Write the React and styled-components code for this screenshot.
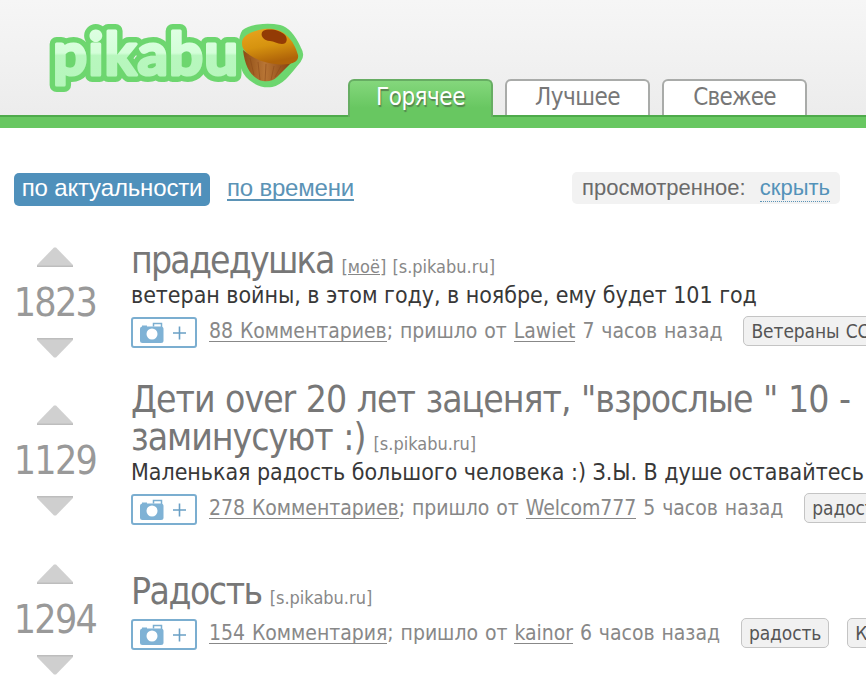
import React from 'react';
import styled, { createGlobalStyle } from 'styled-components';

const GlobalStyle = createGlobalStyle`
  body {
    margin: 0;
    background: #fff;
    font-family: "DejaVu Sans Condensed", "DejaVu Sans", Tahoma, sans-serif;
    font-stretch: condensed;
    overflow: hidden;
  }
  a { color: inherit; }
`;

const Page = styled.div`
  width: 866px;
  height: 684px;
  overflow: hidden;
`;

const Header = styled.header`
  display: flex;
  align-items: flex-end;
  box-sizing: border-box;
  height: 128px;
  border-bottom: 11px solid #68c761;
  background: linear-gradient(#f6f6f6, #ececec);
`;

const LogoLink = styled.a`
  align-self: flex-start;
  width: 348px;
  height: 108px;
`;

const TabBar = styled.nav`
  display: flex;
  flex: 1;
  gap: 12px;
  height: 38px;
  margin-left: -348px;
  padding-left: 348px;
  box-shadow: inset 0 -2px #4eaa4b;
`;

const Tab = styled.a`
  box-sizing: border-box;
  width: 145px;
  height: ${(p) => (p.$active ? 38 : 36)}px;
  border: 2px solid ${(p) => (p.$active ? '#67ad63' : '#a9aba9')};
  border-bottom: 0;
  border-radius: 6px 6px 0 0;
  background: ${(p) => (p.$active ? 'linear-gradient(#84d77c, #68c761 75%)' : '#fff')};
  color: ${(p) => (p.$active ? '#fff' : '#777')};
  text-shadow: ${(p) => (p.$active ? '1px 2px 1px #55834f' : 'none')};
  font-size: 24px;
  line-height: 32px;
  letter-spacing: ${(p) => p.$tracking || -0.5}px;
  text-align: center;
`;

const Toolbar = styled.div`
  display: flex;
  align-items: flex-start;
  height: 50px;
  padding: 45px 26px 0 14px;
  font-family: "Liberation Sans", Arial, sans-serif;
`;

const SortActive = styled.span`
  box-sizing: border-box;
  width: 196px;
  height: 33px;
  border-radius: 5px;
  background: #4f90bb;
  color: #fff;
  font-size: 24px;
  line-height: 30px;
  letter-spacing: -0.15px;
  text-align: center;
`;

const SortLink = styled.a`
  margin-left: 17px;
  border-bottom: 2px solid #5b93b6;
  color: #5b93b6;
  font-size: 24px;
  line-height: 26px;
  padding-top: 2px;
  height: 24px;
  letter-spacing: -0.2px;
`;

const SeenBox = styled.div`
  display: flex;
  box-sizing: border-box;
  width: 268px;
  height: 32px;
  margin: -1px 0 0 auto;
  padding: 0 10px;
  justify-content: space-between;
  border-radius: 5px;
  background: #f2f2f2;
  color: #6b6b6b;
  font-size: 22px;
  line-height: 32px;
`;

const HideLink = styled.a`
  height: 29px;
  border-bottom: 1px dotted #5b93b6;
  color: #5492b9;
`;

const Post = styled.article`
  display: grid;
  grid-template-columns: 131px 1fr;
  grid-template-rows: 158.5px;
  align-items: center;
  height: 158.5px;
`;

const Votes = styled.div`
  display: flex;
  flex-direction: column;
  align-items: center;
  width: 110px;
  height: 111px;
`;

const Score = styled.div`
  height: 71px;
  color: #999;
  font-size: 39px;
  line-height: 71px;
  letter-spacing: -1.7px;
`;

const Body = styled.div`
  padding-bottom: 15px;
  white-space: nowrap;
`;

const Title = styled.h2`
  margin: 0;
  color: #777;
  font-size: 37px;
  font-weight: 400;
  line-height: 38px;
  letter-spacing: ${(p) => p.$tracking}px;
  word-spacing: ${(p) => p.$wordGap || 0}px;
`;

const Source = styled.span`
  margin-left: 8px;
  color: #888;
  font-size: 18px;
  line-height: 1;
  letter-spacing: 0;
  word-spacing: 1px;
`;

const Text = styled.p`
  margin: 0 0 7px;
  color: #383838;
  font-size: 23px;
  line-height: 30px;
  letter-spacing: -0.04px;
`;

const Meta = styled.div`
  display: flex;
  height: 31px;
  margin-top: ${(p) => (p.$apart ? 8 : 0)}px;
  color: #888;
  font-size: 21px;
  line-height: 28px;
  letter-spacing: -0.03px;
  word-spacing: 1px;
  white-space: pre;
`;

const PhotoButton = styled.span`
  display: flex;
  box-sizing: border-box;
  width: 66px;
  height: 31px;
  margin-right: 12px;
  border: 2px solid #7baed0;
  border-radius: 3px;
`;

const Underlined = styled.a`
  height: 24px;
  border-bottom: 1px solid #888;
`;

const Tag = styled.span`
  box-sizing: border-box;
  flex: none;
  height: 30px;
  margin: -1px 0 0 ${(p) => (p.$next ? 18 : 21)}px;
  padding: 0 7px;
  border: 1px solid #c4c4c4;
  border-radius: 5px;
  background: #f1f1f1;
  color: #555;
  font-size: 19px;
  line-height: 28px;
  letter-spacing: -0.1px;
`;

const Logo = () => (
  <svg width="348" height="108" viewBox="0 0 348 108">
    <defs>
      <linearGradient id="letters" x1="0" y1="25" x2="0" y2="90" gradientUnits="userSpaceOnUse">
        <stop offset="0" stopColor="#e0ffe4" />
        <stop offset=".43" stopColor="#d3fed8" />
        <stop offset=".47" stopColor="#b8f7be" />
        <stop offset="1" stopColor="#b5f6bb" />
      </linearGradient>
      <linearGradient id="cake" x1="0" y1="0" x2=".3" y2="1">
        <stop offset="0" stopColor="#e9a51f" />
        <stop offset=".55" stopColor="#d6930f" />
        <stop offset="1" stopColor="#b06409" />
      </linearGradient>
      <linearGradient id="wrapper">
        <stop offset="0" stopColor="#8d4c14" />
        <stop offset=".45" stopColor="#b87535" />
        <stop offset="1" stopColor="#87420f" />
      </linearGradient>
    </defs>
    <g fontFamily="Lato" fontWeight="700" fontSize="60" strokeLinejoin="round">
      <text x="53" y="74.500" textLength="185" fill="#6dd66f" stroke="#6dd66f" strokeWidth="14">pikabu</text>
      <path d="M243 31c6-5 22-8 37-5 8 2 15 11 20 22 3 5 3 9 0 13-9 11-16 22-28 25-12 2-26-6-30-18-2-12-4-30 1-37Z" fill="#6dd66f" stroke="#6dd66f" strokeWidth="2" />
      <text x="53" y="74.500" textLength="185" fill="url(#letters)" stroke="url(#letters)" strokeWidth="3.200" aria-hidden="true">pikabu</text>
    </g>
    <path d="M243 50c9 8 30 13 48 13l-14 14c-4 4-9 5-14 4-10-2-18-12-20-31Z" fill="url(#wrapper)" />
    <path d="m250 58 4 17m4-13 2 18m6-16-1 17m9-15-3 14m10-14-6 11" stroke="#8b4817" strokeWidth="1" fill="none" opacity=".55" />
    <path d="M242 42c1-7 10-11 22-13 9-1 17 1 22 6 7 6 10 13 12 20 1 5-3 8-9 9-14 2-35-3-44-13-3-3-3-6-3-9Z" fill="url(#cake)" />
    <path d="M263 31c6-3 17-1 22 4 3 4 2 9-3 9-5 0-8-3-12-3-6 0-11-6-7-10Z" fill="#933b05" />
  </svg>
);

const Arrow = ({ down }) => (
  <svg width="36" height="20" viewBox="0 0 36 20">
    {down ? (
      <>
        <path d="M0 0h36v2L19 19.5h-2L0 2Z" fill="#cfcfcf" />
        <path d="M0 0h36v1.5H0Z" fill="#bdbdbd" />
      </>
    ) : (
      <>
        <path d="M17 .5h2L36 18v2H0v-2Z" fill="#d0d0d0" />
        <path d="M0 18.5h36V20H0Z" fill="#bdbdbd" />
      </>
    )}
  </svg>
);

const CameraPlus = () => (
  <svg width="62" height="27" viewBox="0 0 62 27">
    <path d="M20.500 7.500V4.500h8v4" fill="none" stroke="#7baed0" strokeWidth="1.500" />
    <rect x="7" y="7.500" width="23.500" height="16.500" rx="2.500" fill="#7fb2d5" />
    <path d="M9 6.500h5v2H9Z" fill="#7fb2d5" />
    <circle cx="19" cy="15" r="5.500" fill="#fff" />
    <path d="M40 14h13M46.500 7.500v13" stroke="#6aa0c5" strokeWidth="1.600" />
  </svg>
);

const posts = [
  {
    score: 1823, title: 'прадедушка', tracking: -1.8, own: true,
    text: 'ветеран войны, в этом году, в ноябре, ему будет 101 год',
    comments: '88 Комментариев', author: 'Lawiet', time: '7 часов назад', tags: ['Ветераны СССР'],
  },
  {
    score: 1129, title: <>Дети over 20 лет заценят, "взрослые " 10 -<br />заминусуют :)</>, tracking: -1, wordGap: 1,
    text: 'Маленькая радость большого человека :) З.Ы. В душе оставайтесь детьми',
    comments: '278 Комментариев', author: 'Welcom777', time: '5 часов назад', tags: ['радость'],
  },
  {
    score: 1294, title: 'Радость', tracking: -1.5,
    comments: '154 Комментария', author: 'kainor', time: '6 часов назад', tags: ['радость', 'Котята'],
  },
];

export default function App() {
  return (
    <Page>
      <GlobalStyle />
      <Header>
        <LogoLink><Logo /></LogoLink>
        <TabBar>
          <Tab $active>Горячее</Tab>
          <Tab>Лучшее</Tab>
          <Tab $tracking={-0.8}>Свежее</Tab>
        </TabBar>
      </Header>
      <Toolbar>
        <SortActive>по актуальности</SortActive>
        <SortLink>по времени</SortLink>
        <SeenBox>просмотренное: <HideLink>скрыть</HideLink></SeenBox>
      </Toolbar>
      {posts.map((p) => (
        <Post key={p.score}>
          <Votes>
            <Arrow />
            <Score>{p.score}</Score>
            <Arrow down />
          </Votes>
          <Body>
            <Title $tracking={p.tracking} $wordGap={p.wordGap}>
              {p.title}
              <Source>{p.own && <><u>[моё]</u> </>}[s.pikabu.ru]</Source>
            </Title>
            {p.text && <Text>{p.text}</Text>}
            <Meta $apart={!p.text}>
              <PhotoButton><CameraPlus /></PhotoButton>
              <Underlined>{p.comments}</Underlined>
              {'; пришло от '}
              <Underlined>{p.author}</Underlined>
              {` ${p.time}`}
              {p.tags.map((t, i) => <Tag key={t} $next={i > 0}>{t}</Tag>)}
            </Meta>
          </Body>
        </Post>
      ))}
    </Page>
  );
}
